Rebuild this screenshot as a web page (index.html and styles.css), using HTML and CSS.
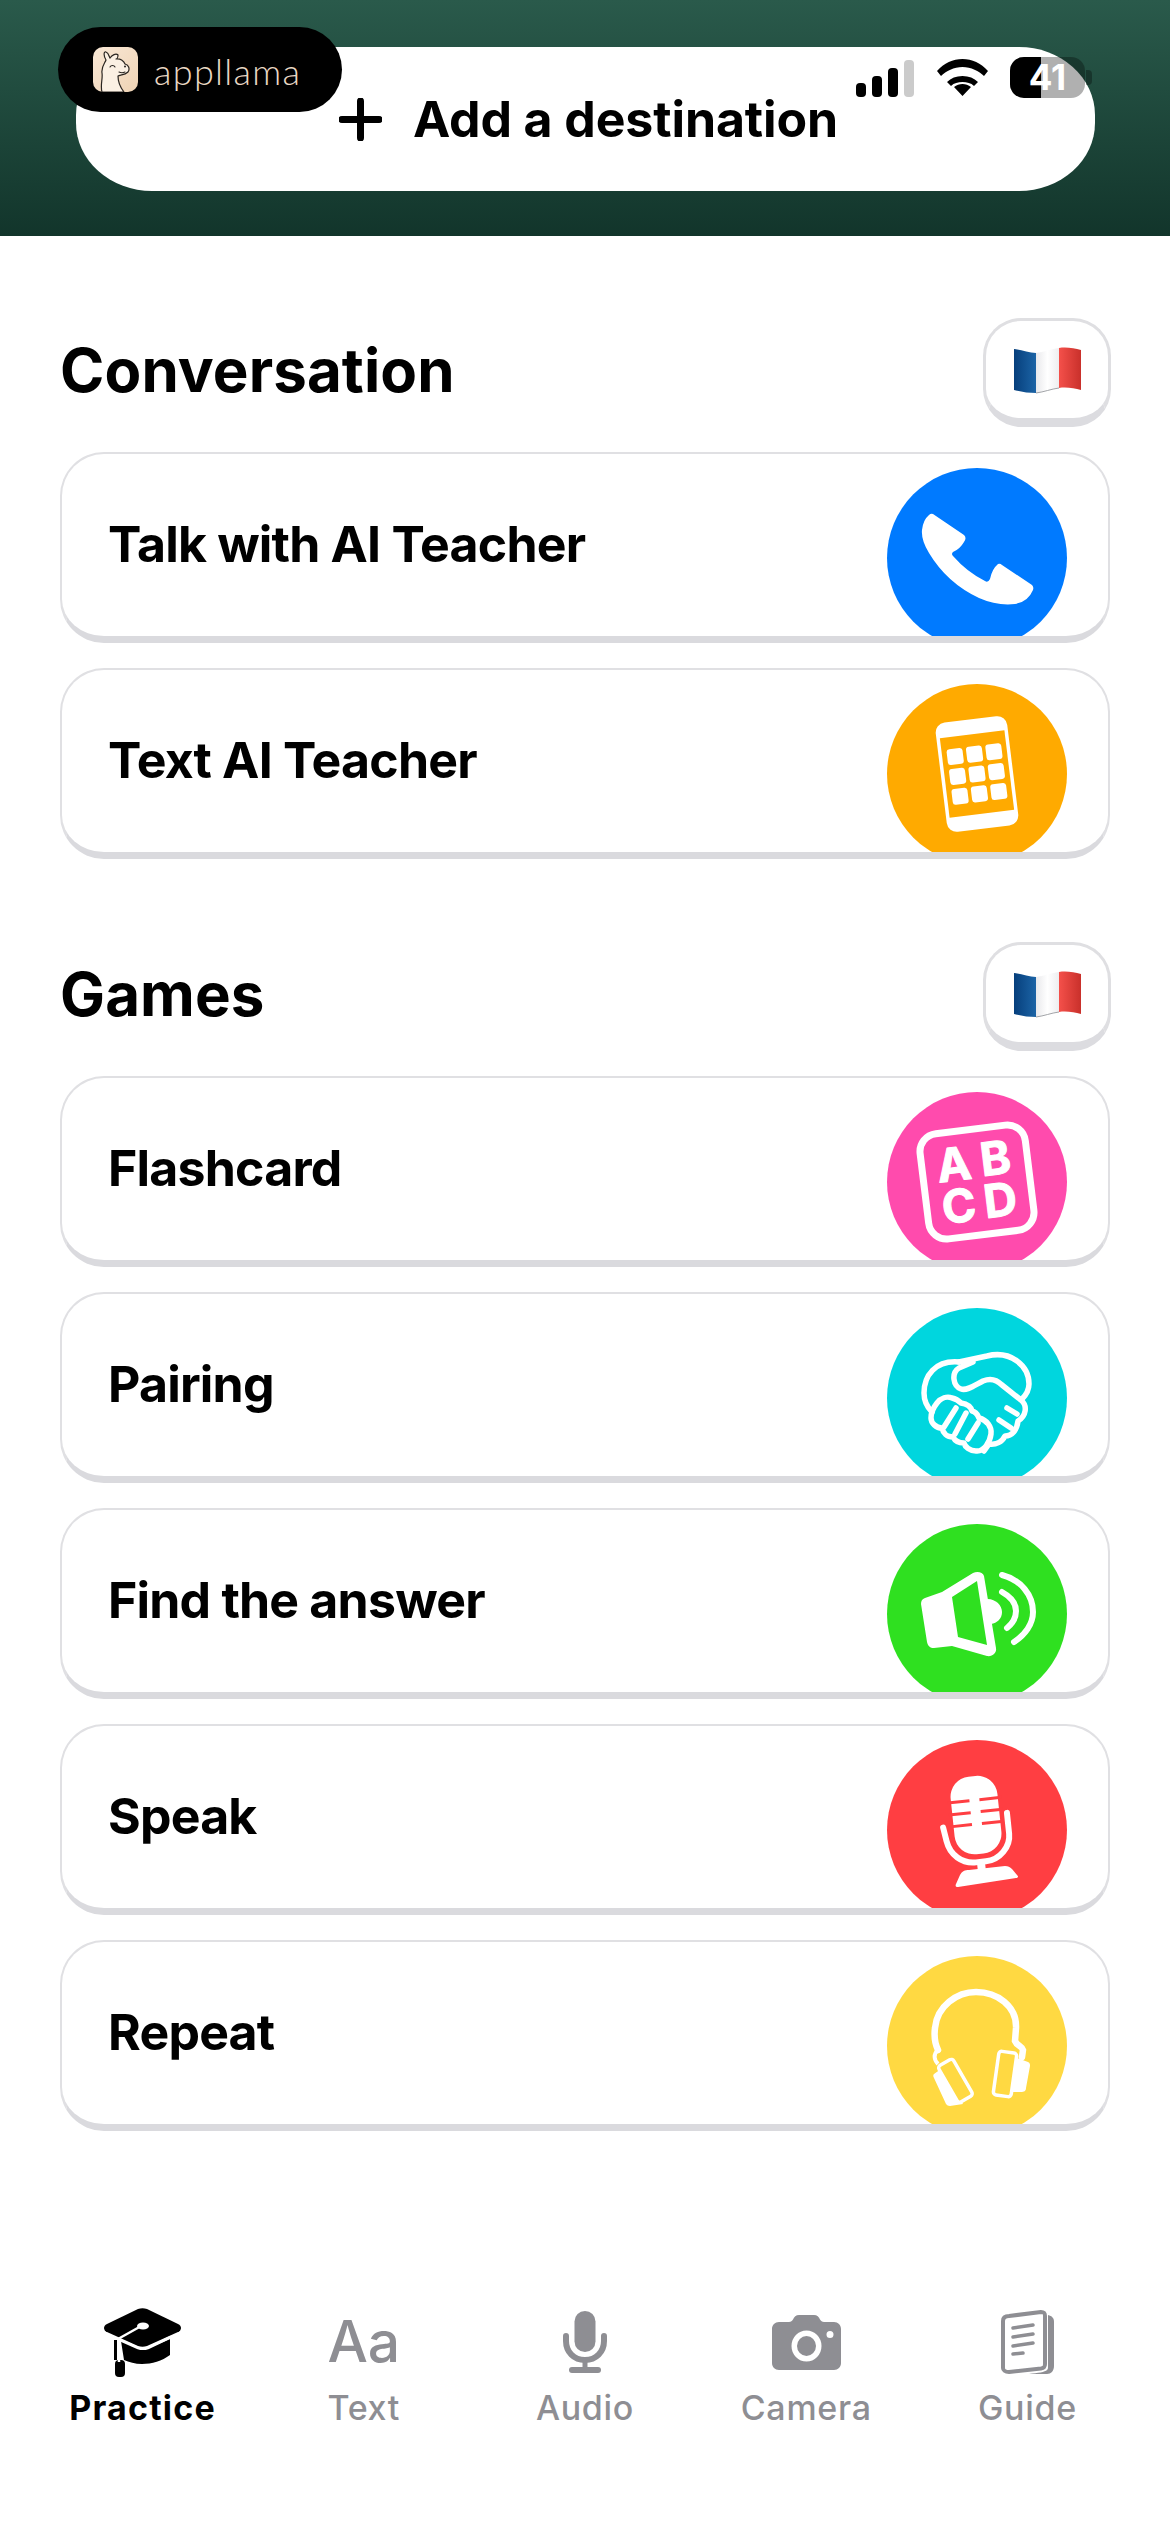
FILE: index.html
```html
<!DOCTYPE html>
<html lang="en">
<head>
<meta charset="utf-8">
<title>Practice</title>
<link rel="stylesheet" href="styles.css">
</head>
<body>
<svg class="defs" width="0" height="0">
  <defs>
    <linearGradient id="fb" x1="0" x2="1" y1="0" y2="0"><stop offset="0" stop-color="#063f7c"/><stop offset="1" stop-color="#1c64a6"/></linearGradient>
    <linearGradient id="fw" x1="0" x2="1" y1="0" y2="0"><stop offset="0" stop-color="#e9e9ec"/><stop offset=".5" stop-color="#ffffff"/><stop offset="1" stop-color="#eeeef0"/></linearGradient>
    <linearGradient id="fr" x1="0" x2="1" y1="0" y2="0"><stop offset="0" stop-color="#f4504a"/><stop offset="1" stop-color="#c9302b"/></linearGradient>
    <linearGradient id="lg" x1="0" x2="1" y1="0" y2="1"><stop offset="0" stop-color="#f9e8d6"/><stop offset="1" stop-color="#efd3b4"/></linearGradient>
    <symbol id="flag" viewBox="0 0 67 48">
      <path fill="url(#fb)" d="M0 3 C8 4 15 7 22 7 L22 47 C15 47 8 46 0 44Z"/>
      <path fill="url(#fw)" d="M22 7 C30 6 37 3 45 2 L45 42 C37 43 30 46 22 47Z"/>
      <path fill="url(#fr)" d="M45 2 C52 1 60 2 67 4 L67 44 C60 42 52 41 45 42Z"/>
      <path fill="none" stroke="#8a8d92" stroke-width=".8" d="M22 47 C30 46 37 43 45 42"/>
    </symbol>
  </defs>
</svg>

<header class="top">
  <button class="add"><svg class="plus" viewBox="0 0 43 43"><path d="M21.5 3V40M3 21.5H40" fill="none" stroke="#000" stroke-width="7" stroke-linecap="round"/></svg><span>Add a destination</span></button>
  <div class="brand">
    <svg class="llama" viewBox="0 0 45 45">
      <rect width="45" height="45" rx="10" fill="url(#lg)"/>
      <path d="M9 45C7 38 10 32 9 26C8 20 12 16 13 13C10 8 11 4 13 5C16 6 16 10 17 11C19 8 23 6 25 8C25 10 24 12 23 12C27 11 31 14 32 17C36 18 37 22 35 25C32 28 27 28 25 29C25 35 27 40 31 45Z" fill="#fbf0e3" stroke="#2a2520" stroke-width="1.200" stroke-linejoin="round"/>
      <path d="M17 20C18 18 21 18 22 20M26 25C28 26 30 26 32 25" fill="none" stroke="#2a2520" stroke-width="1.100" stroke-linecap="round"/>
      <circle cx="32" cy="19.500" r="1" fill="#2a2520"/>
    </svg>
    <span class="brand-name">appllama</span>
  </div>
  <div class="status">
    <div class="bars"><i class="b1"></i><i class="b2"></i><i class="b3"></i><i class="b4"></i></div>
    <svg class="wifi" viewBox="0 0 51 37"><path d="M25.5 37L17 28C22 24 29 24 34 28ZM25.5 8C34 8 42 12 47 17L51 12C44 4 35 0 25.5 0S7 4 0 12L4 17C9 12 17 8 25.5 8ZM25.5 17C19 17 14 19 10 23L14 27C17 24 21 23 25.5 23S34 24 37 27L41 23C37 19 32 17 25.5 17Z"/></svg>
    <div class="battery"><span class="fill"></span><span class="pct">41</span></div>
    <i class="nub"></i>
  </div>
</header>

<main class="content">
  <section class="group">
    <div class="group-head">
      <h2>Conversation</h2>
      <div class="flag-btn"><svg class="flag"><use href="#flag"/></svg></div>
    </div>
    <div class="card"><span class="card-label">Talk with AI Teacher</span>
      <svg class="disc blue" viewBox="0 0 180 180"><path fill="#fff" d="M46 46L77 67Q80 70 77 74Q73 81 66 84Q64 86 66 88Q80 104 98 113Q101 115 103 111Q105 101 111 96Q113 95 115 97L145 117Q147 119 146 122Q141 134 128 136Q110 138 92 130Q60 115 42 85Q34 72 35 62Q36 52 42 47Q44 45 46 46Z"/></svg>
    </div>
    <div class="card"><span class="card-label">Text AI Teacher</span>
      <svg class="disc orange" viewBox="0 0 180 180"><g transform="rotate(-7 90 90)">
        <rect x="54" y="35" width="72" height="110" rx="10" fill="#fff"/>
        <rect x="57.500" y="50" width="65" height="80" fill="#ffaa00"/>
        <g fill="#fff">
          <rect x="62.500" y="62" width="16" height="16" rx="3"/><rect x="82" y="62" width="16" height="16" rx="3"/><rect x="101.500" y="62" width="16" height="16" rx="3"/>
          <rect x="62.500" y="82" width="16" height="16" rx="3"/><rect x="82" y="82" width="16" height="16" rx="3"/><rect x="101.500" y="82" width="16" height="16" rx="3"/>
          <rect x="62.500" y="102" width="16" height="16" rx="3"/><rect x="82" y="102" width="16" height="16" rx="3"/><rect x="101.500" y="102" width="16" height="16" rx="3"/>
        </g></g></svg>
    </div>
  </section>

  <section class="group">
    <div class="group-head">
      <h2>Games</h2>
      <div class="flag-btn"><svg class="flag"><use href="#flag"/></svg></div>
    </div>
    <div class="card"><span class="card-label">Flashcard</span>
      <svg class="disc pink" viewBox="0 0 180 180"><g transform="rotate(-7 90 90)">
        <rect x="37" y="37" width="106" height="106" rx="18" fill="none" stroke="#fff" stroke-width="7"/>
        <g class="abcd"><text x="69" y="86">A</text><text x="111" y="85">B</text><text x="69" y="128">C</text><text x="111" y="127">D</text></g>
      </g></svg>
    </div>
    <div class="card"><span class="card-label">Pairing</span>
      <svg class="disc cyan" viewBox="0 0 180 180"><g fill="none" stroke="#fff" stroke-width="5.500" stroke-linecap="round" stroke-linejoin="round">
        <path d="M72 54C48 52 37 68 37 85C37 92 40 99 45 104"/>
        <path d="M72 54L100 48C124 42 142 58 142 76C142 81 139 87 135 91"/>
        <path d="M86 54L72 60C64 65 66 78 74 81C80 83 88 77 96 73C103 70 110 72 115 77L134 92C141 98 139 108 131 113C130 122 125 128 118 128C115 134 109 137 102 136"/>
        <path d="M50 95C54 90 60 88 65 90C70 91 72 93 74 95C80 96 84 99 85 103C90 104 91 108 92 110C100 112 105 119 104 126C103 134 97 144 89 143C83 143 78 139 77 135C71 135 68 133 66 129C60 129 56 125 55 120C49 120 44 115 44 110C44 105 46 100 50 95Z"/>
        <path d="M69 100L57 119M79 105L68 126M91 115L81 131M120 100L130 106M112 112L124 120M102 136L97 143"/>
      </g></svg>
    </div>
    <div class="card"><span class="card-label">Find the answer</span>
      <svg class="disc green" viewBox="0 0 180 180">
        <path fill="#fff" fill-rule="evenodd" d="M38 74L55 68L86 49C90 47 96 48 97 52L109 124C110 129 105 133 100 132L65 122L47 124C43 124 41 122 40 118L34 80C34 77 35 75 38 74ZM65 73L71 113L100 121L90 57Z"/>
        <path fill="#fff" d="M99 75C108 74 115 81 115 88C115 95 110 99 104 100Z"/>
        <path fill="none" stroke="#fff" stroke-width="6" stroke-linecap="round" d="M115 68C124 73 129 79 129 87C129 94 125 100 120 104M115 51C134 56 146 71 146 88C146 100 138 111 127 118"/>
      </svg>
    </div>
    <div class="card"><span class="card-label">Speak</span>
      <svg class="disc red" viewBox="0 0 180 180">
        <g transform="rotate(-6 90 75)">
          <rect x="65.500" y="36" width="47" height="78" rx="20" fill="#fff"/>
          <path fill="none" stroke="#ff3e42" stroke-width="3" d="M62 60H84M94 60H116M62 72H84M94 72H116M62 84H84M94 84H116"/>
          <path fill="none" stroke="#fff" stroke-width="6" stroke-linecap="round" d="M55 84L57 98C59 112 70 122 84 122H94C108 122 120 110 120 97L120 76"/>
          <rect x="85" y="120" width="8" height="12" fill="#fff"/>
        </g>
        <path fill="#fff" d="M71 147C69 147 68 146 69 144L73 135C75 131 78 130 82 130L118 126C121 126 123 127 125 129L130 135C132 137 131 138 129 138Z"/>
      </svg>
    </div>
    <div class="card"><span class="card-label">Repeat</span>
      <svg class="disc yellow" viewBox="0 0 180 180">
        <path fill="none" stroke="#fff" stroke-width="6.500" stroke-linecap="round" d="M51 94C47 86 47 80 48 72C50 50 70 36 89 36C110 36 130 50 129 72L128 85C130 90 135 90 136 94L135 101"/>
        <path fill="none" stroke="#fff" stroke-width="4" stroke-linejoin="round" d="M51 94C46 98 47 104 51 108"/>
        <path fill="#fff" d="M47 118L54 113L76 148L63 150C61 150 60 149 59 148L47 122C46 120 46 119 47 118Z"/>
        <path fill="#fff" d="M130 102L141 106C143 107 143 108 143 110L139 132C139 135 137 136 134 136L122 136Z"/>
        <rect x="60" y="104" width="17" height="42" rx="3" transform="rotate(-30 68 125)" fill="#ffd942" stroke="#fff" stroke-width="3.500"/>
        <rect x="109" y="96" width="18" height="44" rx="3" transform="rotate(8 118 118)" fill="#ffd942" stroke="#fff" stroke-width="3.500"/>
      </svg>
    </div>
  </section>
</main>

<nav class="tabs">
  <a class="tab active">
    <span class="tab-icon"><svg class="ic-cap" viewBox="0 0 77 69">
      <path d="M34 1C37 0 40 0 43 1L74 16C78 18 78 22 74 24L43 38C40 39 37 39 34 38L3 24C-1 22-1 18 3 16Z"/>
      <path d="M17 33L33 40C37 42 41 42 45 40L66 31V47C58 53 48 56 38 56C31 56 25 54 20 52Z"/>
      <path d="M10 32H13V52H10Z"/>
      <rect x="11" y="52" width="10" height="17" rx="4"/>
      <path d="M39 17L14 31M16 32L34 40C37 41 41 41 44 40L67 29M15 31V54" fill="none" stroke="#fff" stroke-width="2.500"/>
      <ellipse cx="39" cy="18" rx="6" ry="3.500" fill="#fff"/>
    </svg></span>
    <span class="tab-label">Practice</span>
  </a>
  <a class="tab">
    <span class="tab-icon"><span class="aa">Aa</span></span>
    <span class="tab-label">Text</span>
  </a>
  <a class="tab">
    <span class="tab-icon"><svg class="ic-mic" viewBox="0 0 44 62">
      <rect x="11.500" y="0" width="21" height="41" rx="10.500"/>
      <path d="M3 25V30C3 41 11 49 22 49S41 41 41 30V25" fill="none" stroke="#8e8e93" stroke-width="6" stroke-linecap="round"/>
      <path d="M19.500 48H24.500V57H19.500Z"/>
      <rect x="6" y="56" width="32" height="6" rx="3"/>
    </svg></span>
    <span class="tab-label">Audio</span>
  </a>
  <a class="tab">
    <span class="tab-icon"><svg class="ic-camera" viewBox="0 0 69 55">
      <path fill-rule="evenodd" d="M7 7H17C19 7 20 6 21 4.500C22 2 24 0 27 0H42C45 0 47 2 48 4.500C49 6 50 7 52 7H62C66 7 69 10 69 14V48C69 52 66 55 62 55H7C3 55 0 52 0 48V14C0 10 3 7 7 7ZM34.500 15.500A15 15.500 0 1 0 34.500 46.500A15 15.500 0 1 0 34.500 15.500ZM58 16A3.500 3.500 0 1 0 58 23A3.500 3.500 0 1 0 58 16Z"/>
      <ellipse cx="34.500" cy="31" rx="9.500" ry="10"/>
    </svg></span>
    <span class="tab-label">Camera</span>
  </a>
  <a class="tab">
    <span class="tab-icon"><svg class="ic-guide" viewBox="0 0 53 64">
      <path d="M47 5C51 6 53 8 53 12V56C53 61 50 64 46 64H28C37 63 44 62 46 60C47 59 47 58 47 56Z"/>
      <path fill="none" stroke="#8e8e93" stroke-width="4" stroke-linejoin="round" d="M8 6L40 2C43 2 44 3 44 6V54C44 57 43 58 40 58.500L8 62C4 62 2 60 2 58V11C2 8 4 6 8 6Z"/>
      <path fill="none" stroke="#8e8e93" stroke-width="3.500" stroke-linecap="round" d="M12 18L32 15M12 27L32 24M12 36L32 33M12 44L22 43"/>
    </svg></span>
    <span class="tab-label">Guide</span>
  </a>
</nav>
</body>
</html>
```

FILE: styles.css
```css
* { box-sizing: border-box; }
html, body { margin: 0; padding: 0; }
body {
  width: 1170px;
  height: 2532px;
  overflow: hidden;
  background: #fff;
  color: #000;
  font-family: Inter, "Noto Sans", sans-serif;
}
.defs { position: absolute; }

/* header */
.top {
  position: relative;
  height: 236px;
  padding: 47px 75px 45px 76px;
  background: linear-gradient(#2a5a4b, #12352b);
}
.add {
  width: 100%;
  height: 144px;
  display: flex;
  align-items: center;
  justify-content: center;
  gap: 31px;
  border: 0;
  border-radius: 76px / 68px;
  background: #fff;
  font-family: inherit;
  font-size: 50px;
  font-weight: 700;
  letter-spacing: -0.1px;
  color: #000;
  padding: 0 0 0 6px;
}
.plus { width: 43px; height: 43px; }

.brand {
  position: absolute;
  left: 58px;
  top: 27px;
  width: 284px;
  height: 85px;
  display: flex;
  align-items: center;
  gap: 16px;
  padding-left: 35px;
  background: #000;
  border-radius: 43px;
}
.llama { width: 45px; height: 45px; }
.brand-name {
  font-family: Lato, sans-serif;
  font-weight: 300;
  font-size: 36px;
  letter-spacing: 1.3px;
  color: #ead8c4;
  line-height: 1;
  margin-top: 3px;
}

.status {
  position: absolute;
  left: 856px;
  top: 57px;
  display: flex;
  align-items: flex-start;
}
.bars {
  display: flex;
  align-items: flex-end;
  gap: 6px;
  height: 39px;
  margin-top: 1px;
}
.bars i { display: block; width: 10px; border-radius: 4px; background: #000; }
.b1 { height: 14px; }
.b2 { height: 21px; }
.b3 { height: 29px; }
.bars .b4 { height: 37px; background: #cbcbcb; }
.wifi { width: 51px; height: 37px; margin: 2px 0 0 23px; }
.battery {
  position: relative;
  width: 75px;
  height: 41px;
  margin-left: 22px;
  border-radius: 14px;
  overflow: hidden;
  background: rgba(0, 0, 0, 0.31);
}
.fill { position: absolute; left: 0; top: 0; bottom: 0; width: 31px; background: #000; }
.pct {
  position: relative;
  display: block;
  text-align: center;
  font-size: 35px;
  font-weight: 700;
  line-height: 41px;
  color: #fff;
}
.nub {
  width: 6px;
  height: 15px;
  margin: 13px 0 0 1px;
  border-radius: 0 4px 4px 0;
  background: rgba(0, 0, 0, 0.31);
}

/* content */
.content { padding: 82px 60px 0; }
.group { display: flex; flex-direction: column; gap: 25px; }
.group + .group { margin-top: 83px; }
.group-head {
  display: flex;
  align-items: center;
  justify-content: space-between;
  height: 109px;
  margin-right: -1px;
}
h2 {
  margin: 0 0 6px;
  font-size: 60px;
  font-weight: 700;
  letter-spacing: 0.1px;
  line-height: 1;
}
.flag-btn {
  width: 128px;
  height: 109px;
  display: flex;
  align-items: center;
  justify-content: center;
  background: #fff;
  border: 3px solid #dfdfe2;
  border-bottom: 9px solid #dcdce0;
  border-radius: 38px;
}
.flag { width: 67px; height: 48px; }

.card {
  height: 191px;
  display: flex;
  justify-content: space-between;
  align-items: center;
  overflow: hidden;
  padding: 0 41px 0 46px;
  background: #fff;
  border: 2px solid #e0e0e3;
  border-bottom: 7px solid #dadade;
  border-radius: 44px;
}
.card-label {
  font-size: 50px;
  font-weight: 700;
  letter-spacing: -0.8px;
  line-height: 1;
  margin-bottom: 2px;
}
.disc {
  flex: none;
  align-self: flex-start;
  width: 180px;
  height: 180px;
  margin-top: 14px;
  border-radius: 50%;
}
.blue { background: #007aff; }
.orange { background: #ffaa00; }
.pink { background: #ff4bad; }
.cyan { background: #00d6de; }
.green { background: #2fe020; }
.red { background: #ff3e42; }
.yellow { background: #ffd942; }
.abcd text {
  font-family: Inter, sans-serif;
  font-size: 46px;
  font-weight: 700;
  fill: #fff;
  stroke: #fff;
  stroke-width: 1;
  stroke-linejoin: round;
  text-anchor: middle;
}

/* tabs */
.tabs {
  display: grid;
  grid-template-columns: repeat(5, 1fr);
  margin-top: 175px;
  padding: 0 32px;
}
.tab {
  display: flex;
  flex-direction: column;
  align-items: center;
  gap: 10px;
  color: #8e8e93;
  fill: #8e8e93;
}
.tab-icon {
  height: 72px;
  display: flex;
  align-items: center;
  justify-content: center;
}
.tab-label {
  font-size: 34px;
  font-weight: 500;
  line-height: 40px;
  letter-spacing: 0.7px;
}
.tab.active { color: #000; fill: #000; }
.tab.active .tab-label { font-weight: 700; letter-spacing: 1.2px; }
.aa { font-size: 57px; font-weight: 500; line-height: 72px; }
.ic-cap { width: 77px; height: 69px; }
.ic-mic { width: 44px; height: 62px; }
.ic-camera { width: 69px; height: 55px; }
.ic-guide { width: 53px; height: 64px; }
```
